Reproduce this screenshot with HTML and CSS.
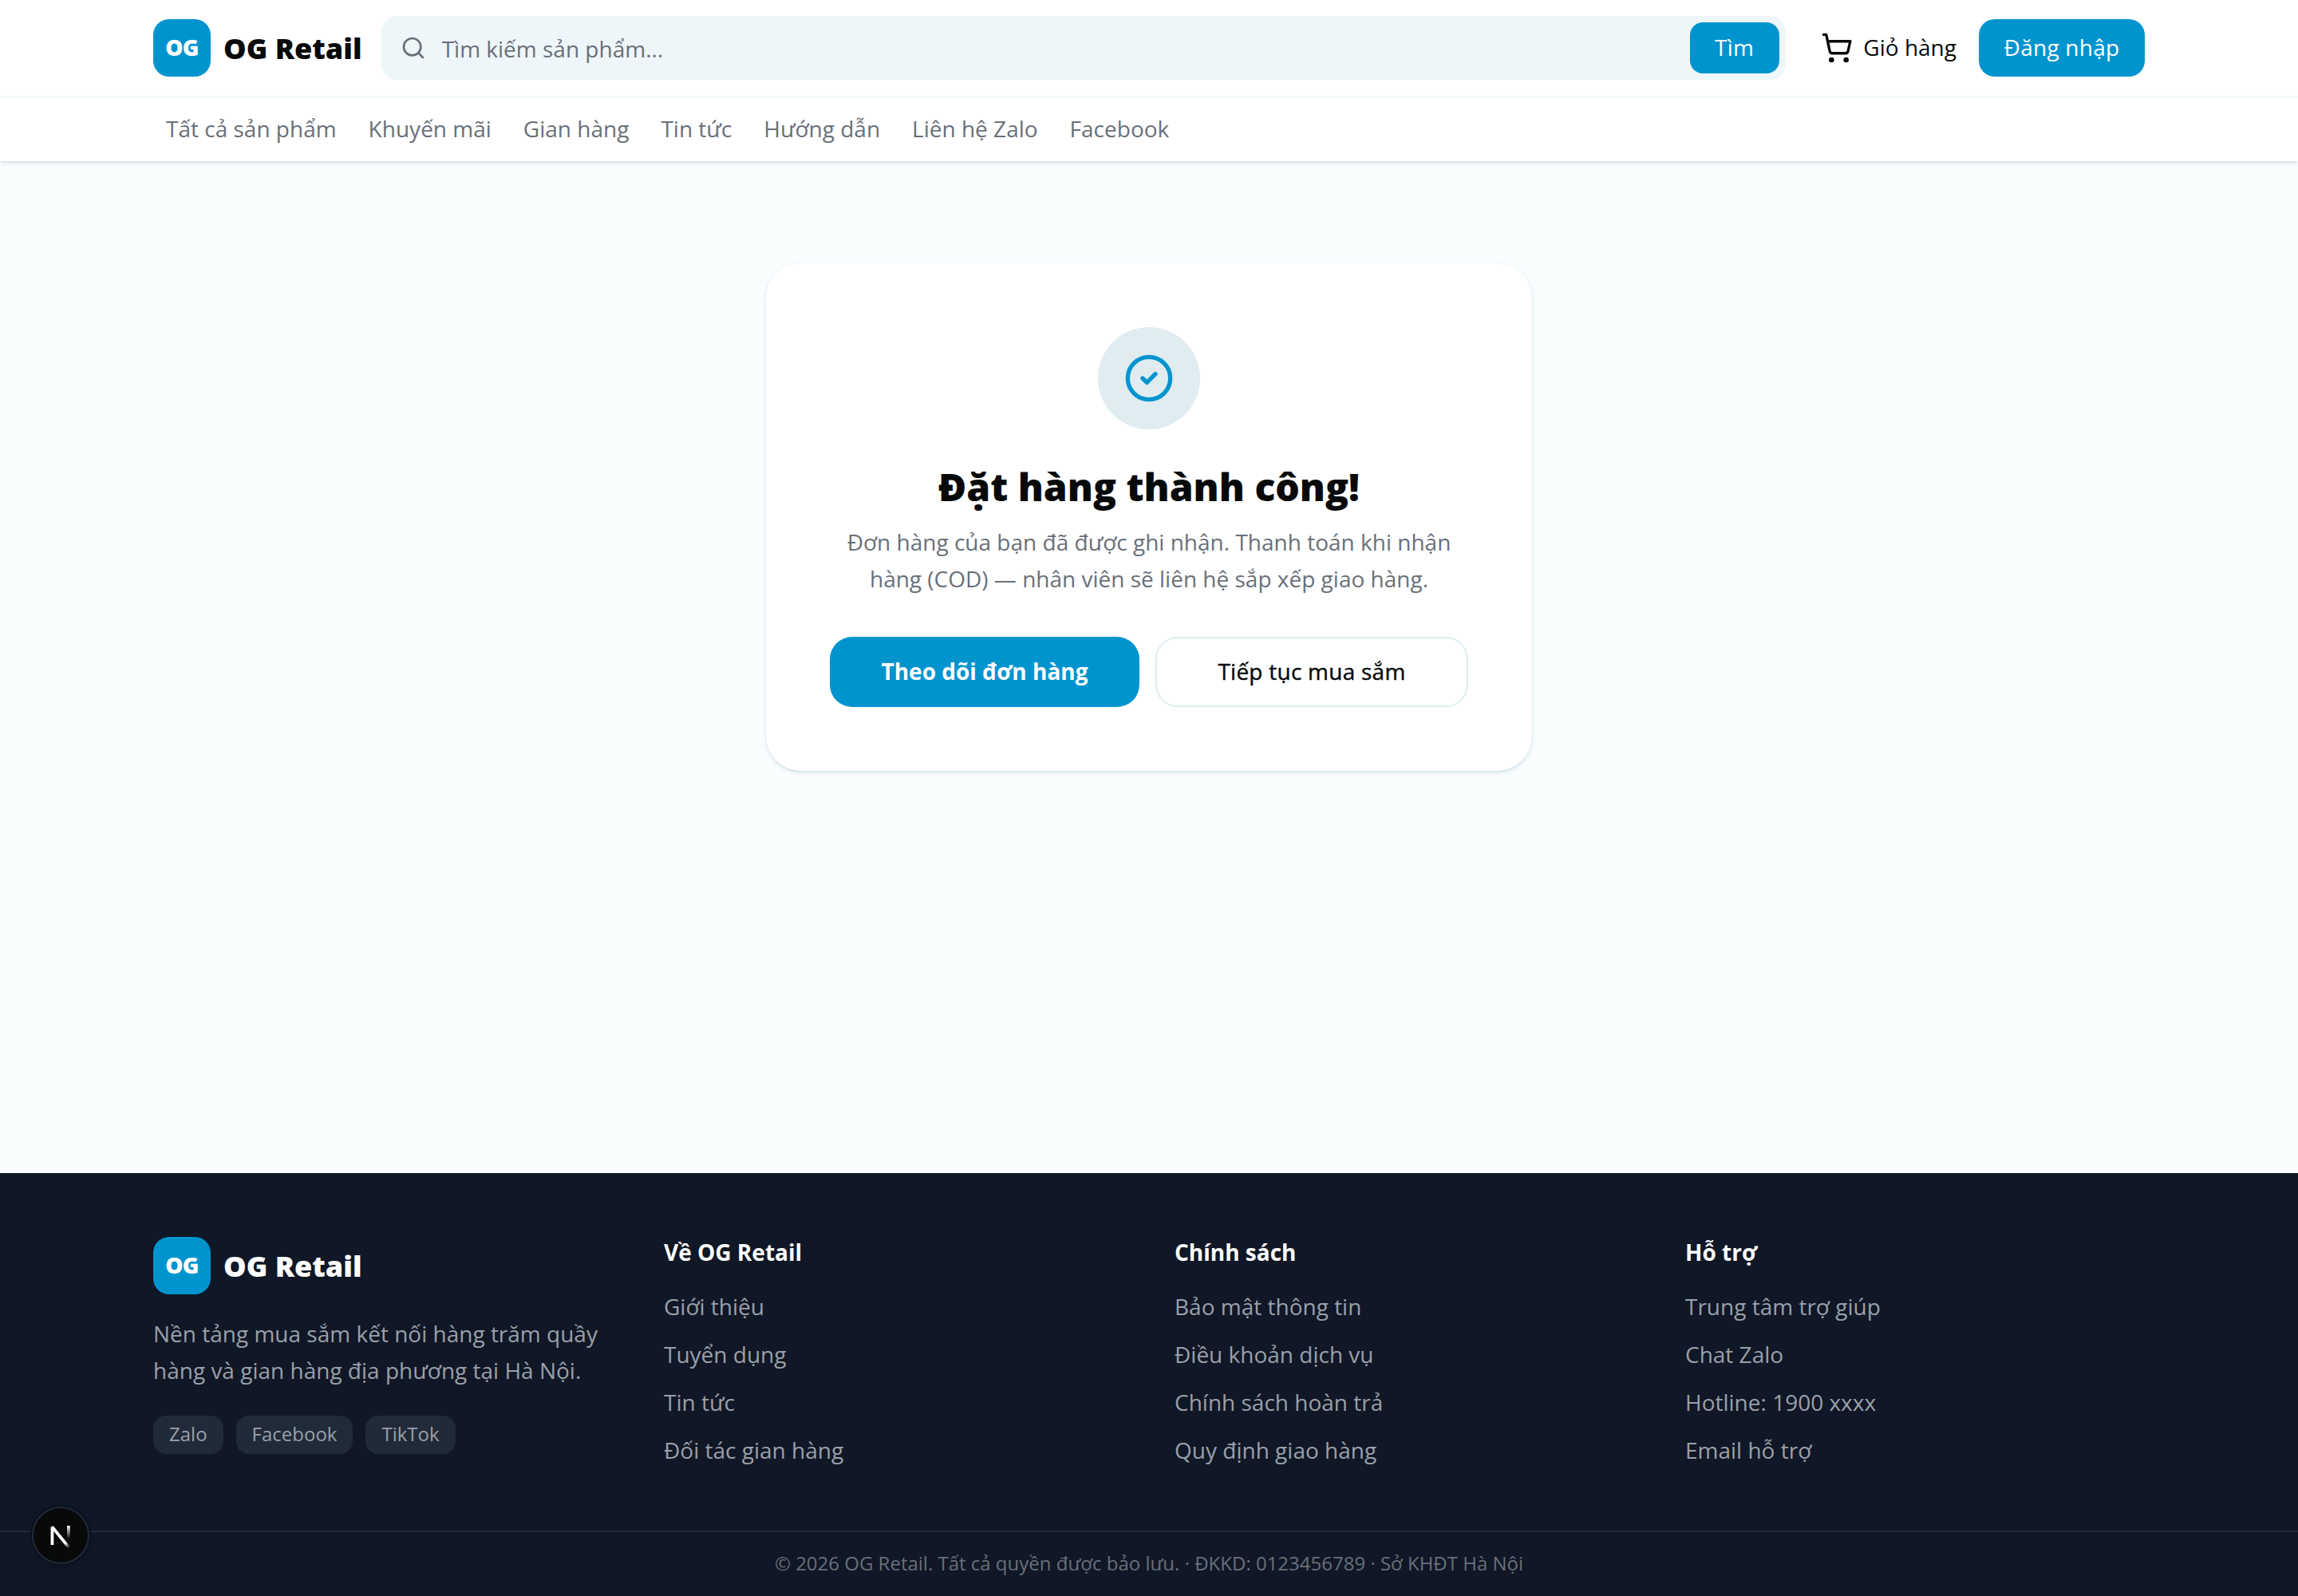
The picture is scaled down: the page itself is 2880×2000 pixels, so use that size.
FILE: index.html
```html
<!DOCTYPE html>
<html lang="vi">
<head>
  <meta charset="UTF-8">
  <meta name="viewport" content="width=device-width, initial-scale=1">
  <title>OG Retail</title>
  <link rel="stylesheet" href="styles.css">
</head>
<body>
  <header class="header">
    <div class="container topbar">
      <a class="brand" href="#">
        <span class="brand-mark">OG</span>
        <span class="brand-name">OG Retail</span>
      </a>
      <form class="search">
        <svg class="search-icon" viewBox="0 0 24 24" fill="none" stroke="currentColor" stroke-width="2" stroke-linecap="round" stroke-linejoin="round">
          <circle cx="11" cy="11" r="8"/>
          <path d="m21 21-4.3-4.3"/>
        </svg>
        <input class="search-input" type="text" placeholder="Tìm kiếm sản phẩm...">
        <button class="search-btn" type="button">Tìm</button>
      </form>
      <div class="actions">
        <a class="cart" href="#">
          <svg class="cart-icon" viewBox="0 0 24 24" fill="none" stroke="currentColor" stroke-width="2" stroke-linecap="round" stroke-linejoin="round">
            <circle cx="8" cy="21" r="1"/>
            <circle cx="19" cy="21" r="1"/>
            <path d="M2.05 2.05h2l2.66 12.42a2 2 0 0 0 2 1.58h9.78a2 2 0 0 0 1.95-1.57l1.65-7.43H5.12"/>
          </svg>
          <span class="cart-label">Giỏ hàng</span>
        </a>
        <a class="login" href="#">Đăng nhập</a>
      </div>
    </div>
    <div class="nav-row">
      <nav class="container nav">
        <a href="#">Tất cả sản phẩm</a>
        <a href="#">Khuyến mãi</a>
        <a href="#">Gian hàng</a>
        <a href="#">Tin tức</a>
        <a href="#">Hướng dẫn</a>
        <a href="#">Liên hệ Zalo</a>
        <a href="#">Facebook</a>
      </nav>
    </div>
  </header>

  <main class="main">
    <section class="card">
      <div class="check">
        <svg class="check-icon" viewBox="0 0 24 24" fill="none" stroke="currentColor" stroke-width="2" stroke-linecap="round" stroke-linejoin="round">
          <circle cx="12" cy="12" r="10"/>
          <path d="m9 12 2 2 4-4"/>
        </svg>
      </div>
      <h1 class="title">Đặt hàng thành công!</h1>
      <p class="message">Đơn hàng của bạn đã được ghi nhận. Thanh toán khi nhận hàng (COD) — nhân viên sẽ liên hệ sắp xếp giao hàng.</p>
      <div class="buttons">
        <a class="btn btn-primary" href="#">Theo dõi đơn hàng</a>
        <a class="btn btn-outline" href="#">Tiếp tục mua sắm</a>
      </div>
    </section>
  </main>

  <footer class="footer">
    <div class="container footer-grid">
      <div>
        <a class="brand" href="#">
          <span class="brand-mark">OG</span>
          <span class="brand-name">OG Retail</span>
        </a>
        <p class="about">Nền tảng mua sắm kết nối hàng trăm quầy hàng và gian hàng địa phương tại Hà Nội.</p>
        <div class="tags">
          <span class="tag">Zalo</span>
          <span class="tag">Facebook</span>
          <span class="tag">TikTok</span>
        </div>
      </div>
      <div>
        <h3 class="col-title">Về OG Retail</h3>
        <ul class="links">
          <li><a href="#">Giới thiệu</a></li>
          <li><a href="#">Tuyển dụng</a></li>
          <li><a href="#">Tin tức</a></li>
          <li><a href="#">Đối tác gian hàng</a></li>
        </ul>
      </div>
      <div>
        <h3 class="col-title">Chính sách</h3>
        <ul class="links">
          <li><a href="#">Bảo mật thông tin</a></li>
          <li><a href="#">Điều khoản dịch vụ</a></li>
          <li><a href="#">Chính sách hoàn trả</a></li>
          <li><a href="#">Quy định giao hàng</a></li>
        </ul>
      </div>
      <div>
        <h3 class="col-title">Hỗ trợ</h3>
        <ul class="links">
          <li><a href="#">Trung tâm trợ giúp</a></li>
          <li><a href="#">Chat Zalo</a></li>
          <li><a href="#">Hotline: 1900 xxxx</a></li>
          <li><a href="#">Email hỗ trợ</a></li>
        </ul>
      </div>
    </div>
    <div class="copyright">© 2026 OG Retail. Tất cả quyền được bảo lưu. · ĐKKD: 0123456789 · Sở KHĐT Hà Nội</div>
  </footer>

  <div class="dev-badge">
    <svg class="dev-icon" viewBox="0 0 40 40" fill="none">
      <defs>
        <linearGradient id="fadeDiag" x1="22" y1="22" x2="30" y2="34" gradientUnits="userSpaceOnUse">
          <stop stop-color="#fff"/>
          <stop offset="0.5" stop-color="#fff"/>
          <stop offset="1" stop-color="#fff" stop-opacity="0"/>
        </linearGradient>
        <linearGradient id="fadeStem" x1="0" y1="9" x2="0" y2="24" gradientUnits="userSpaceOnUse">
          <stop stop-color="#fff"/>
          <stop offset="1" stop-color="#fff" stop-opacity="0"/>
        </linearGradient>
      </defs>
      <path d="M10.4 31V10.5L30 34.5" stroke="url(#fadeDiag)" stroke-width="3.4" stroke-linejoin="bevel"/>
      <path d="M29 9v15" stroke="url(#fadeStem)" stroke-width="3.4"/>
    </svg>
  </div>
</body>
</html>
```

FILE: styles.css
```css
* {
  box-sizing: border-box;
}
body {
  margin: 0;
  min-height: 2000px;
  display: flex;
  flex-direction: column;
  font-family: "Open Sans", "Noto Sans", sans-serif;
  font-size: 28px;
  line-height: 40px;
  color: #080a0a;
  background-color: #f9fdfe;
}
a {
  color: inherit;
  text-decoration: none;
}
h1, h3, p, ul {
  margin: 0;
  padding: 0;
}
svg {
  display: block;
  flex-shrink: 0;
}
.container {
  width: 2496px;
  margin: 0 auto;
}

/* Header */
.header {
  position: relative;
  background-color: #fff;
  box-shadow: 0 2px 6px rgba(0, 80, 115, 0.1), 0 2px 4px -2px rgba(0, 80, 115, 0.2);
}
.topbar {
  display: flex;
  align-items: center;
  height: 120px;
}
.brand {
  display: flex;
  align-items: center;
  gap: 16px;
}
.brand-mark {
  display: flex;
  align-items: center;
  justify-content: center;
  width: 72px;
  height: 72px;
  padding-bottom: 2px;
  border-radius: 20px;
  background-color: #0094cf;
  color: #fff;
  font-weight: 800;
  letter-spacing: -0.7px;
}
.brand-name {
  padding-top: 1px;
  font-size: 36px;
  line-height: 56px;
  font-weight: 800;
}
.search {
  display: flex;
  align-items: center;
  width: 1760px;
  height: 80px;
  margin-left: 24px;
  padding: 8px 8px 8px 24px;
  border-radius: 20px;
  background-color: #eef6f9;
}
.search-icon {
  width: 32px;
  height: 32px;
  color: #697079;
}
.search-input {
  flex: 1;
  padding: 2px 0 0;
  margin-left: 20px;
  border: 0;
  outline: 0;
  background: transparent;
  font: inherit;
}
.search-input::placeholder {
  color: #697079;
}
.search-btn {
  width: 112px;
  height: 64px;
  padding: 0 0 2px;
  border: 0;
  border-radius: 16px;
  background-color: #0094cf;
  color: #fff;
  font: inherit;
  font-weight: 500;
  letter-spacing: 0.25px;
}
.actions {
  display: flex;
  align-items: center;
  gap: 28px;
  margin-left: auto;
}
.cart {
  display: flex;
  align-items: center;
  gap: 13px;
}
.cart-icon {
  width: 40px;
  height: 40px;
}
.cart-label {
  padding-bottom: 2px;
}
.login {
  display: flex;
  align-items: center;
  justify-content: center;
  width: 208px;
  height: 72px;
  padding-bottom: 2px;
  border-radius: 20px;
  background-color: #0094cf;
  color: #fff;
  font-weight: 500;
  letter-spacing: 0.25px;
}
.nav-row {
  border-top: 2px solid #eef6f9;
}
.nav {
  display: flex;
  align-items: center;
  gap: 8px;
  height: 80px;
  padding-bottom: 2px;
}
.nav a {
  padding: 0 16px;
  color: #697079;
}

/* Order result */
.main {
  flex: 1;
  padding-top: 128px;
}
.card {
  width: 960px;
  margin: 0 auto;
  padding: 80px;
  border-radius: 44px;
  background-color: #fff;
  box-shadow: 0 2px 6px rgba(0, 80, 115, 0.1), 0 2px 4px -2px rgba(0, 80, 115, 0.2);
  text-align: center;
}
.check {
  display: flex;
  align-items: center;
  justify-content: center;
  width: 128px;
  height: 128px;
  margin: 0 auto 40px;
  border-radius: 50%;
  background-color: #e0ecf0;
  color: #0094cf;
}
.check-icon {
  width: 64px;
  height: 64px;
}
.title {
  font-size: 48px;
  line-height: 64px;
  font-weight: 800;
}
.message {
  margin-top: 14px;
  line-height: 46px;
  color: #697079;
}
.buttons {
  display: flex;
  gap: 20px;
  margin-top: 50px;
}
.btn {
  flex: 1 1 0;
  display: flex;
  align-items: center;
  justify-content: center;
  height: 88px;
  padding-bottom: 2px;
  border-radius: 28px;
}
.btn-primary {
  background-color: #0094cf;
  color: #fff;
  font-weight: 700;
}
.btn-outline {
  border: 2px solid #e0ecf0;
  font-weight: 500;
  letter-spacing: 0.25px;
  -webkit-text-stroke: 0.4px currentColor;
}

/* Footer */
.footer {
  height: 530px;
  background-color: #101726;
  color: #9aa0a9;
}
.footer-grid {
  display: grid;
  grid-template-columns: repeat(4, 1fr);
  gap: 64px;
  height: 448px;
  padding-top: 80px;
}
.footer .brand-name {
  color: #fff;
}
.about {
  margin-top: 26px;
  line-height: 46px;
}
.tags {
  display: flex;
  gap: 16px;
  margin-top: 34px;
}
.tag {
  padding: 7px 20px 9px;
  border-radius: 16px;
  background-color: #212a38;
  font-size: 24px;
  line-height: 32px;
}
.col-title {
  margin: -1px 0 28px;
  color: #fff;
  font-size: 28px;
  line-height: 40px;
  font-weight: 700;
}
.links {
  display: flex;
  flex-direction: column;
  gap: 20px;
  list-style: none;
}
.copyright {
  padding-top: 23px;
  border-top: 2px solid #212a38;
  color: #697079;
  font-size: 24px;
  line-height: 32px;
  text-align: center;
}

/* Floating dev tools badge */
.dev-badge {
  position: fixed;
  left: 40px;
  bottom: 40px;
  display: flex;
  align-items: center;
  justify-content: center;
  width: 72px;
  height: 72px;
  border: 2px solid #212a38;
  border-radius: 50%;
  background-color: #080a0a;
  box-shadow: 0 0 0 2px #0c111b, 0 4px 8px rgba(0, 0, 0, 0.2);
}
.dev-icon {
  width: 44px;
  height: 44px;
}
```
